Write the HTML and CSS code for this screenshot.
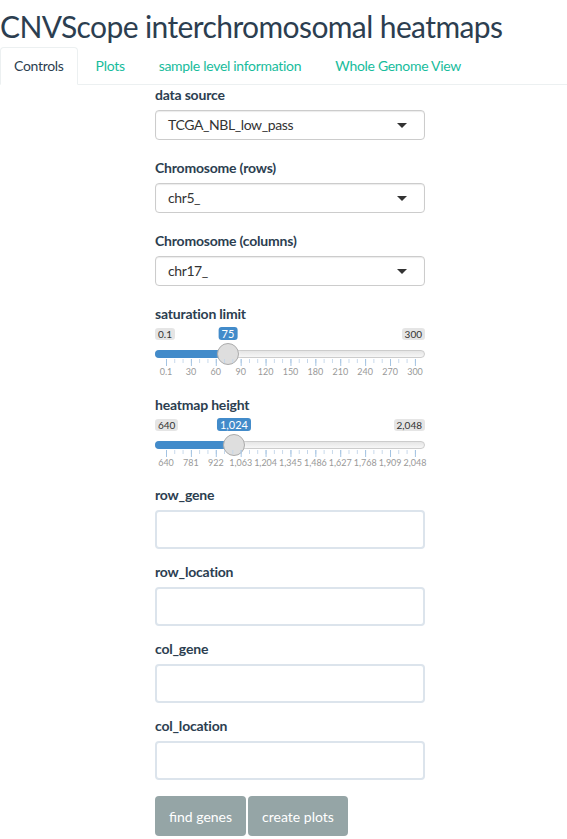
FILE: index.html
```html
<!DOCTYPE html>
<html>
<head>
<meta charset="utf-8">
<link rel="stylesheet" href="styles.css">
</head>
<body>
<h2 class="title">CNVScope interchromosomal heatmaps</h2>
<ul class="tabs">
  <li class="tab active"><a>Controls</a></li>
  <li class="tab"><a>Plots</a></li>
  <li class="tab"><a>sample level information</a></li>
  <li class="tab"><a>Whole Genome View</a></li>
</ul>
<div class="content">
  <div class="form">
    <div class="group group-select">
      <label class="lbl">data source</label>
      <div class="select">TCGA_NBL_low_pass<span class="caret"></span></div>
    </div>
    <div class="group group-select">
      <label class="lbl">Chromosome (rows)</label>
      <div class="select">chr5_<span class="caret"></span></div>
    </div>
    <div class="group group-select">
      <label class="lbl">Chromosome (columns)</label>
      <div class="select">chr17_<span class="caret"></span></div>
    </div>
    <div class="group group-slider">
      <label class="lbl">saturation limit</label>
      <div class="slider">
        <span class="irs-min">0.1</span>
        <span class="irs-max">300</span>
        <span class="irs-line"></span>
        <span class="irs-bar" style="width:73px"></span>
        <span class="irs-single" style="left:73px">75</span>
        <span class="irs-handle" style="left:73px"></span>
        <span class="irs-grid"></span>
        <span class="gt" style="left:11px">0.1</span>
        <span class="gt" style="left:35.9px">30</span>
        <span class="gt" style="left:60.8px">60</span>
        <span class="gt" style="left:85.7px">90</span>
        <span class="gt" style="left:110.6px">120</span>
        <span class="gt" style="left:135.5px">150</span>
        <span class="gt" style="left:160.4px">180</span>
        <span class="gt" style="left:185.3px">210</span>
        <span class="gt" style="left:210.2px">240</span>
        <span class="gt" style="left:235.1px">270</span>
        <span class="gt" style="left:260px">300</span>
      </div>
    </div>
    <div class="group group-slider2">
      <label class="lbl">heatmap height</label>
      <div class="slider">
        <span class="irs-min">640</span>
        <span class="irs-max">2,048</span>
        <span class="irs-line"></span>
        <span class="irs-bar" style="width:79px"></span>
        <span class="irs-single" style="left:79px">1,024</span>
        <span class="irs-handle" style="left:79px"></span>
        <span class="irs-grid"></span>
        <span class="gt" style="left:11px">640</span>
        <span class="gt" style="left:35.9px">781</span>
        <span class="gt" style="left:60.8px">922</span>
        <span class="gt" style="left:85.7px">1,063</span>
        <span class="gt" style="left:110.6px">1,204</span>
        <span class="gt" style="left:135.5px">1,345</span>
        <span class="gt" style="left:160.4px">1,486</span>
        <span class="gt" style="left:185.3px">1,627</span>
        <span class="gt" style="left:210.2px">1,768</span>
        <span class="gt" style="left:235.1px">1,909</span>
        <span class="gt" style="left:260px">2,048</span>
      </div>
    </div>
    <div class="group group-input">
      <label class="lbl">row_gene</label>
      <input class="text" type="text">
    </div>
    <div class="group group-input">
      <label class="lbl">row_location</label>
      <input class="text" type="text">
    </div>
    <div class="group group-input">
      <label class="lbl">col_gene</label>
      <input class="text" type="text">
    </div>
    <div class="group group-last">
      <label class="lbl">col_location</label>
      <input class="text" type="text">
    </div>
    <div class="buttons">
      <button class="btn">find genes</button>
      <button class="btn">create plots</button>
    </div>
  </div>
</div>
</body>
</html>
```

FILE: styles.css
```css
* { box-sizing: border-box; }
html, body {
  margin: 0;
  padding: 0;
  background: #fff;
  font-family: Lato, "Open Sans", sans-serif;
  font-size: 14px;
  color: #2c3e50;
}
.title {
  margin: 6px 0 0 0;
  font-size: 30px;
  letter-spacing: -0.6px;
  font-weight: 400;
  line-height: 41px;
  color: #2c3e50;
  height: 41px;
}
.tabs {
  list-style: none;
  margin: 0;
  padding: 0;
  display: flex;
  border-bottom: 1px solid #ecf0f1;
}
.tab {
  margin-right: 2px;
  margin-bottom: -1px;
}
.tab a {
  display: block;
  padding: 9px 15px;
  line-height: 18px;
  border: 1px solid transparent;
  border-radius: 4px 4px 0 0;
  color: #18bc9c;
  font-size: 14px;
  letter-spacing: -0.3px;
}
.tab.active a {
  padding: 9px 13px;
  color: #2c3e50;
  border-color: #ecf0f1 #ecf0f1 #fff;
  background: #fff;
}
.content {
  display: flex;
}
.form {
  margin-left: 155px;
  width: 270px;
  display: flex;
  flex-direction: column;
}
.group {
  display: flex;
  flex-direction: column;
}
.lbl {
  font-weight: 700;
  font-size: 14px;
  letter-spacing: -0.2px;
  line-height: 20px;
  height: 20px;
  margin-bottom: 5px;
  color: #2c3e50;
}
.group-select { margin-bottom: 18px; }
.group-slider { margin-bottom: 18px; }
.group-slider2 { margin-bottom: 17px; }
.group-slider .lbl, .group-slider2 .lbl { margin-bottom: 0; }
.group-input { margin-bottom: 13px; }
.group-last { margin-bottom: 16px; }
.select {
  position: relative;
  height: 30px;
  border: 1px solid #cccccc;
  border-radius: 4px;
  padding: 0 12px;
  line-height: 28px;
  font-size: 14px;
  letter-spacing: -0.4px;
  color: #333;
  background: #fff;
  box-shadow: inset 0 1px 1px rgba(0,0,0,0.08);
}
.caret {
  position: absolute;
  right: 17px;
  top: 12px;
  width: 0;
  height: 0;
  border-style: solid;
  border-width: 5px 5px 0 5px;
  border-color: #333 transparent transparent transparent;
}
.slider {
  position: relative;
  height: 53px;
  font-size: 10px;
}
.irs-min, .irs-max {
  position: absolute;
  top: 4px;
  background: rgba(0,0,0,0.1);
  color: #333;
  font-size: 10px;
  line-height: 12px;
  padding: 0 3px;
  border-radius: 3px;
}
.irs-min { left: 0; }
.irs-max { right: 0; }
.irs-single {
  position: absolute;
  top: 3px;
  transform: translateX(-50%);
  background: #428bca;
  color: #fff;
  font-size: 11px;
  line-height: 13px;
  padding: 0 3px;
  border-radius: 3px;
}
.irs-line {
  position: absolute;
  left: 0;
  right: 0;
  top: 26px;
  height: 8px;
  border: 1px solid #cccccc;
  border-radius: 8px;
  background: linear-gradient(to bottom, #dddddd -50%, #ffffff 150%);
}
.irs-bar {
  position: absolute;
  left: 0;
  top: 26px;
  height: 8px;
  background: #428bca;
  border-radius: 8px 0 0 8px;
}
.irs-handle {
  position: absolute;
  top: 19px;
  width: 22px;
  height: 22px;
  margin-left: -11px;
  border: 1px solid #ababab;
  border-radius: 50%;
  background: #dedede;
  box-shadow: 1px 1px 3px rgba(255,255,255,0.3);
}
.irs-grid {
  position: absolute;
  left: 11px;
  top: 35px;
  width: 250px;
  height: 7px;
  background-image:
    linear-gradient(to right, #a3c3e2 1px, transparent 1px),
    linear-gradient(to right, #c3d6ea 1px, transparent 1px);
  background-size: 24.9px 7px, 8.3px 4px;
  background-repeat: repeat-x, repeat-x;
  background-position: 0 0, 0 0;
}
.gt {
  position: absolute;
  top: 43px;
  transform: translateX(-50%);
  font-size: 9px;
  line-height: 10px;
  color: #999;
  white-space: nowrap;
}
.text {
  height: 39px;
  width: 100%;
  border: 2px solid #dce4ec;
  border-radius: 4px;
  background: #fff;
  padding: 0 12px;
  font-family: inherit;
  font-size: 15px;
  outline: none;
}
.buttons {
  display: flex;
  gap: 2px;
}
.btn {
  height: 40px;
  padding: 0 14px;
  border: none;
  border-radius: 4px;
  background: #95a5a6;
  color: #fff;
  font-family: Lato, sans-serif;
  font-size: 14px;
}
```
